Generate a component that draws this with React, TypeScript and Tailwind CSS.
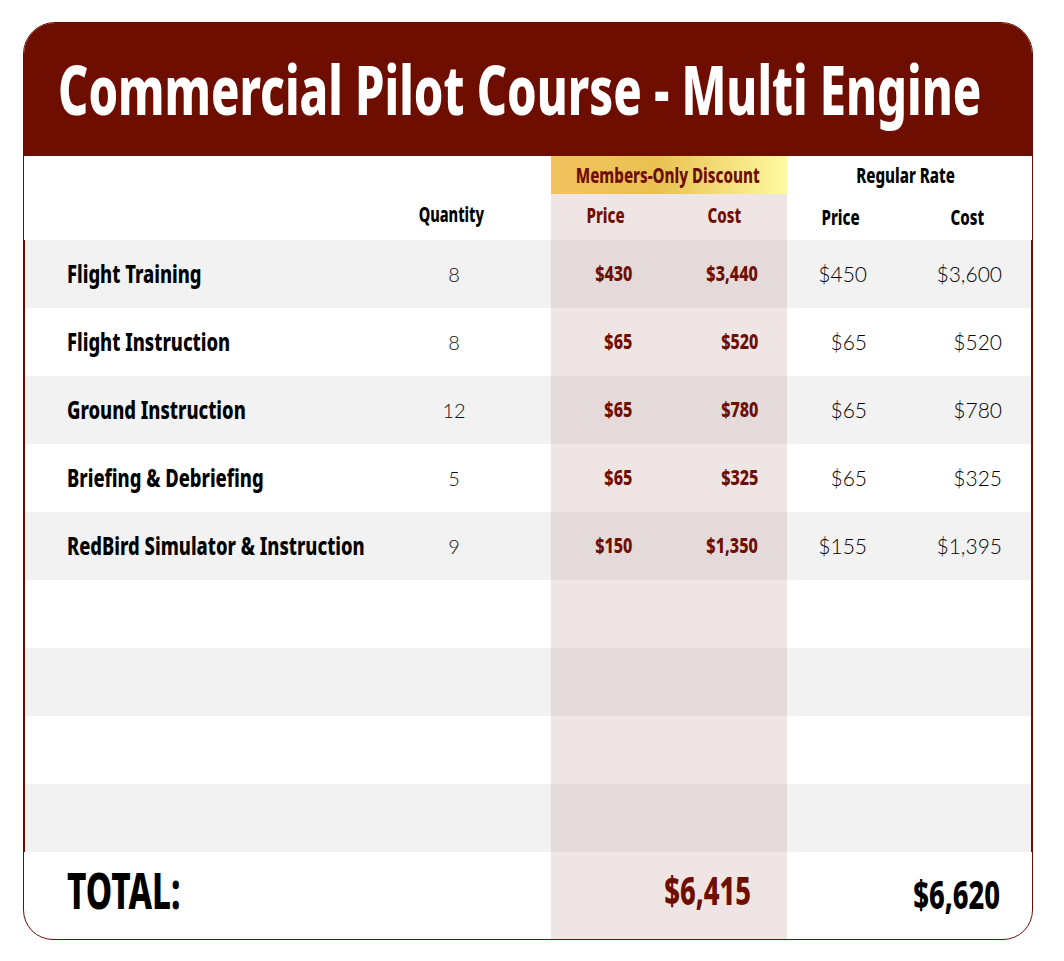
import React from "react";

const BOLD = { fontFamily: '"Noto Sans","Liberation Sans",sans-serif' };
const LIGHT = { fontFamily: 'Lato,"Noto Sans",sans-serif' };

type Row = { label: string; qty: string; mp: string; mc: string; rp: string; rc: string };

const rows: Row[] = [
  { label: "Flight Training", qty: "8", mp: "$430", mc: "$3,440", rp: "$450", rc: "$3,600" },
  { label: "Flight Instruction", qty: "8", mp: "$65", mc: "$520", rp: "$65", rc: "$520" },
  { label: "Ground Instruction", qty: "12", mp: "$65", mc: "$780", rp: "$65", rc: "$780" },
  { label: "Briefing & Debriefing", qty: "5", mp: "$65", mc: "$325", rp: "$65", rc: "$325" },
  { label: "RedBird Simulator & Instruction", qty: "9", mp: "$150", mc: "$1,350", rp: "$155", rc: "$1,395" },
  { label: "", qty: "", mp: "", mc: "", rp: "", rc: "" },
  { label: "", qty: "", mp: "", mc: "", rp: "", rc: "" },
  { label: "", qty: "", mp: "", mc: "", rp: "", rc: "" },
  { label: "", qty: "", mp: "", mc: "", rp: "", rc: "" },
];

const GRID = "grid grid-cols-[376px_151px_118px_118px_123px_121px]";

function Sq({ cls, children }: { cls: string; children: React.ReactNode }) {
  return <span className={"inline-block whitespace-nowrap " + cls}>{children}</span>;
}

export default function App() {
  return (
    <div className="bg-white w-[1064px] h-[961px] pt-[22px] pl-[23px]" style={BOLD}>
      <div className="w-[1010px] h-[918px] border border-[#6e0e00] rounded-t-[32px] rounded-b-[30px] overflow-hidden bg-white flex flex-col">
        <div className="h-[133px] bg-[#6e0e00] flex items-center pl-[34px]">
          <h1 className="text-white font-extrabold text-[67px] leading-none">
            <Sq cls="scale-x-[0.703] origin-left">Commercial Pilot Course - Multi Engine</Sq>
          </h1>
        </div>

        <div className={GRID + " h-[84px] font-extrabold text-[21px] leading-none"}>
          <div />
          <div className="flex items-end justify-center pb-[15px] pr-[49px] text-black">
            <Sq cls="scale-x-[0.69]">Quantity</Sq>
          </div>
          <div className="col-span-2 flex flex-col">
            <div className="h-[38px] flex items-center justify-center pr-[2px] bg-[linear-gradient(90deg,#f1c25f_0%,#e9c150_45%,#f5e07e_75%,#fdf9a0_100%)] text-[#6e0e00]">
              <Sq cls="scale-x-[0.72]">Members-Only Discount</Sq>
            </div>
            <div className="flex-1 bg-[#efe5e5] grid grid-cols-2 text-[#6e0e00] pb-[3px]">
              <div className="flex items-center justify-center pr-[8px]">
                <Sq cls="scale-x-[0.72]">Price</Sq>
              </div>
              <div className="flex items-center justify-center pr-[8px]">
                <Sq cls="scale-x-[0.72]">Cost</Sq>
              </div>
            </div>
          </div>
          <div className="col-span-2 flex flex-col text-black">
            <div className="h-[38px] flex items-center justify-center pr-[6px]">
              <Sq cls="scale-x-[0.72]">Regular Rate</Sq>
            </div>
            <div className="flex-1 grid grid-cols-[123px_121px]">
              <div className="flex items-center justify-center pr-[16px]">
                <Sq cls="scale-x-[0.72]">Price</Sq>
              </div>
              <div className="flex items-center justify-center pr-[6px]">
                <Sq cls="scale-x-[0.72]">Cost</Sq>
              </div>
            </div>
          </div>
        </div>

        {rows.map((r, i) => {
          const grey = i % 2 === 0;
          return (
            <div
              key={i}
              className={
                GRID +
                " h-[68px] shadow-[inset_1px_0_0_#6e0e00,inset_-1px_0_0_#6e0e00] " +
                (grey ? "bg-[#f2f2f2]" : "bg-white")
              }
            >
              <div className="flex items-center pl-[43px] pb-[2px] font-extrabold text-[25px] leading-none text-black">
                <Sq cls="scale-x-[0.735] origin-left">{r.label}</Sq>
              </div>
              <div className="flex items-center justify-center pr-[43px] pb-[1px] text-[20px] text-[#111] font-light" style={LIGHT}>
                {r.qty}
              </div>
              <div
                className={
                  "flex items-center justify-end pr-[37px] pb-[1px] font-extrabold text-[21px] leading-none text-[#6e0e00] " +
                  (grey ? "bg-[#e4dada]" : "bg-[#efe5e5]")
                }
              >
                <Sq cls="scale-x-[0.77] origin-right">{r.mp}</Sq>
              </div>
              <div
                className={
                  "flex items-center justify-end pr-[29px] pb-[1px] font-extrabold text-[21px] leading-none text-[#6e0e00] " +
                  (grey ? "bg-[#e4dada]" : "bg-[#efe5e5]")
                }
              >
                <Sq cls="scale-x-[0.77] origin-right">{r.mc}</Sq>
              </div>
              <div className="flex items-center justify-end pr-[43px] pb-[1px] text-[21px] text-black font-light" style={LIGHT}>
                {r.rp}
              </div>
              <div className="flex items-center justify-end pr-[29px] pb-[1px] text-[21px] text-black font-light" style={LIGHT}>
                {r.rc}
              </div>
            </div>
          );
        })}

        <div className={GRID + " flex-1 font-extrabold leading-none"}>
          <div className="flex items-center pl-[43px] pb-[10px] text-[49px] text-black">
            <Sq cls="scale-x-[0.68] origin-left">TOTAL:</Sq>
          </div>
          <div />
          <div className="col-span-2 bg-[#efe5e5] flex items-center justify-end pr-[36px] pb-[12px] text-[39px] text-[#6e0e00]">
            <Sq cls="scale-x-[0.70] origin-right">$6,415</Sq>
          </div>
          <div className="col-span-2 flex items-center justify-end pr-[31px] pb-[4px] text-[39px] text-black">
            <Sq cls="scale-x-[0.70] origin-right">$6,620</Sq>
          </div>
        </div>
      </div>
    </div>
  );
}
